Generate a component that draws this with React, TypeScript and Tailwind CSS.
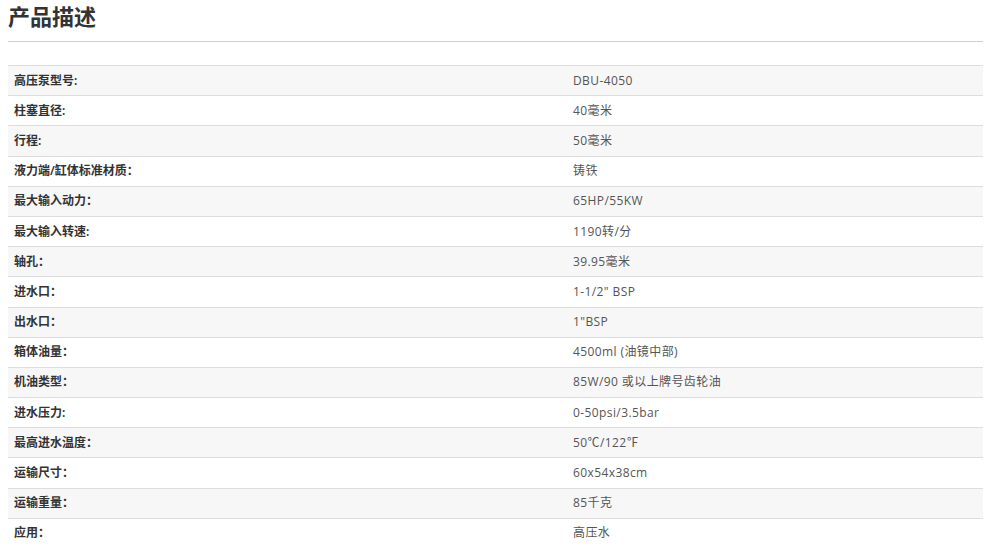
import React from "react";

const rows: [string, string][] = [
  ["高压泵型号:", "DBU-4050"],
  ["柱塞直径:", "40毫米"],
  ["行程:", "50毫米"],
  ["液力端/缸体标准材质：", "铸铁"],
  ["最大输入动力：", "65HP/55KW"],
  ["最大输入转速:", "1190转/分"],
  ["轴孔：", "39.95毫米"],
  ["进水口：", "1-1/2\" BSP"],
  ["出水口：", "1\"BSP"],
  ["箱体油量：", "4500ml (油镜中部)"],
  ["机油类型：", "85W/90 或以上牌号齿轮油"],
  ["进水压力:", "0-50psi/3.5bar"],
  ["最高进水温度：", "50℃/122℉"],
  ["运输尺寸：", "60x54x38cm"],
  ["运输重量：", "85千克"],
  ["应用：", "高压水"],
];

export default function App() {
  return (
    <div className="w-[989px] h-[546px] overflow-hidden bg-white px-2 font-['Noto_Sans','Noto_Sans_CJK_SC',sans-serif]">
      <h1 className="pt-[1px] text-[22px] leading-[30px] font-bold text-[#333]">产品描述</h1>
      <div className="mt-[10px] w-[975px] border-t border-[#cfcfcf]"></div>
      <div className="mt-[23px] w-[975px]">
        {rows.map(([k, v], i) => (
          <div
            key={i}
            className={`flex h-[30.2px] items-center border-t border-[#dddddd] text-[12px] ${i % 2 === 0 ? "bg-[#f7f7f7]" : "bg-white"}`}
          >
            <div className="w-[565px] pl-[6px] font-semibold text-[#333]">{k}</div>
            <div className="tracking-[0.4px] text-[#555] font-['Open_Sans','Noto_Sans_CJK_SC',sans-serif]">{v}</div>
          </div>
        ))}
      </div>
    </div>
  );
}
